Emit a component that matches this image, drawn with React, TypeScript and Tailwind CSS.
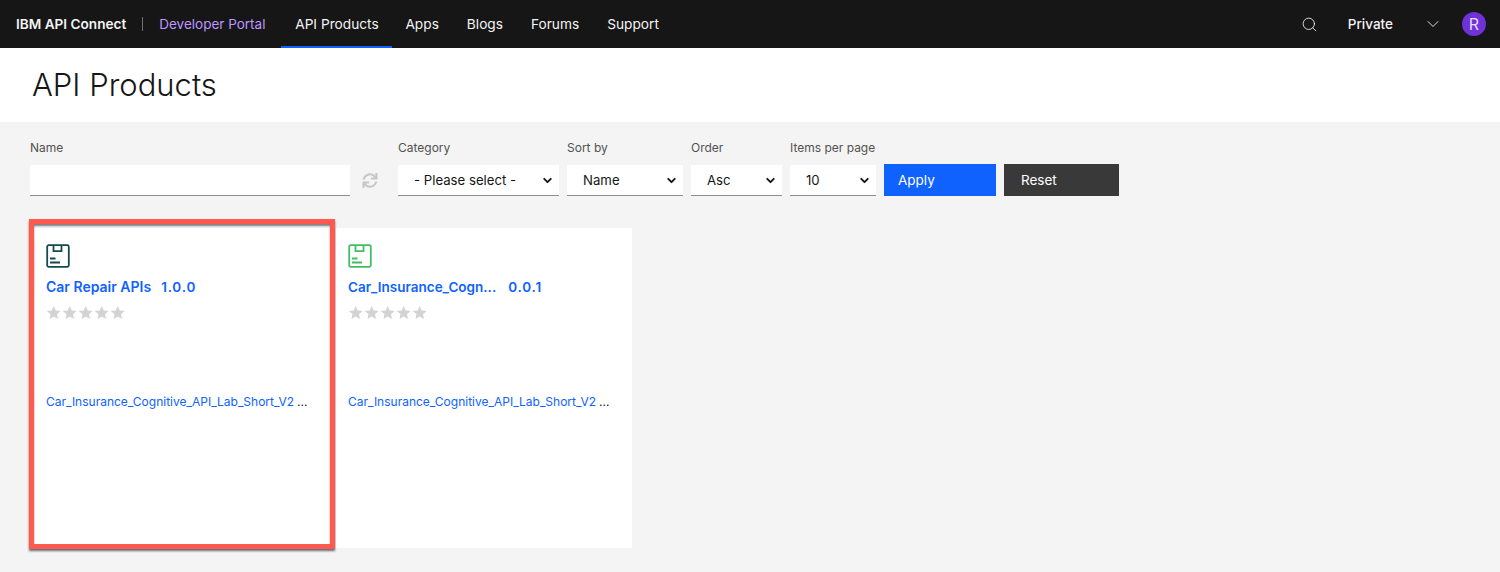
import { ChevronDown, Search } from "lucide-react";
import { FaSync } from "react-icons/fa";

const FONT = "font-['Inter','Liberation_Sans',sans-serif]";

const NAV_LINKS = ["Apps", "Blogs", "Forums", "Support"];

const FILTERS = [
  { label: "Category", value: "- Please select -", width: "w-[161px]" },
  { label: "Sort by", value: "Name", width: "w-[116px]" },
  { label: "Order", value: "Asc", width: "w-[91px]" },
  { label: "Items per page", value: "10", width: "w-[86px]" },
];

function ProductIcon({ color }: { color: string }) {
  return (
    <svg width="24" height="24" viewBox="0 0 24 24" fill="none" stroke={color} strokeWidth="1.8">
      <rect x="1.2" y="1.2" width="21.6" height="21.6" rx="1.5" />
      <path d="M7.5 1.5V7.2H15.5V1.5" />
      <path d="M4 14.5H9.5M4 18.5H14" />
    </svg>
  );
}

function Stars() {
  return (
    <div className="mt-[8px] flex h-[16px] items-center gap-[0.5px]">
      {[0, 1, 2, 3, 4].map((i) => (
        <svg key={i} width="15.5" height="15" viewBox="0 0 24 24" fill="#d3d3d3">
          <path d="M12 1.5l3.2 7.3 7.9.8-6 5.2 1.8 7.7L12 18.4l-6.9 4.1 1.8-7.7-6-5.2 7.9-.8z" />
        </svg>
      ))}
    </div>
  );
}

function ProductCard({
  name,
  version,
  color,
  nameClass,
  highlighted,
}: {
  name: string;
  version: string;
  color: string;
  nameClass: string;
  highlighted?: boolean;
}) {
  return (
    <div className="relative h-[320px] w-[296px] bg-white px-[12px] pt-[16px]">
      <ProductIcon color={color} />
      <div className="mt-[10px] flex leading-[18px] font-semibold text-[#0f62fe]">
        <span className={nameClass}>{name}</span>
        <span className="text-[13.5px] tracking-[0.8px]">{version}</span>
      </div>
      <Stars />
      <div className="mt-[74px] flex text-[12px] leading-[16px] text-[#0f62fe]">
        <span>Car_Insurance_Cognitive_API_Lab_Short_V2</span>
        <span className="ml-[3px] text-[#161616]">...</span>
      </div>
      {highlighted && (
        <div className="pointer-events-none absolute top-[-9px] right-[-5px] bottom-[-1px] left-[-5px] border-[5px] border-[#ff5a4d] shadow-[0_2px_2px_rgba(40,50,60,0.7),inset_0_2px_2px_rgba(40,50,60,0.6)]" />
      )}
    </div>
  );
}

export default function App() {
  return (
    <div className={`${FONT} h-[572px] w-[1500px] overflow-hidden bg-[#f4f4f4]`}>
      {/* Top nav */}
      <header className="flex h-[48px] items-center bg-[#161616] text-[13.5px] text-[#f4f4f4]">
        <span className="ml-[16px] text-[13.6px] font-semibold">IBM API Connect</span>
        <span className="mx-[16px] h-[14px] w-px bg-[#6f6f6f]" />
        <span className="text-[#be95ff]">Developer Portal</span>
        <nav className="ml-[16px] flex h-full text-[13.7px]">
          <a className="flex h-full w-[111px] items-center justify-center border-b-2 border-[#0f62fe] pt-[2px]">
            API Products
          </a>
          <div className="ml-[13px] flex h-full items-center gap-[28px]">
            {NAV_LINKS.map((link) => (
              <a key={link}>{link}</a>
            ))}
          </div>
        </nav>
        <div className="ml-auto flex items-center">
          <Search size={17} strokeWidth={1.2} />
          <span className="ml-[30px] font-medium">Private</span>
          <ChevronDown size={20} strokeWidth={1.1} className="ml-[30px]" />
          <span className="mr-[14px] ml-[19px] flex h-[24px] w-[24px] items-center justify-center rounded-full bg-[#6f32d8] text-[16px] text-[#e8daff]">
            R
          </span>
        </div>
      </header>

      {/* Page title */}
      <div className="flex h-[74px] items-center bg-white pl-[32px]">
        <h1 className="text-[31px] font-light text-[#161616]">API Products</h1>
      </div>

      {/* Filters */}
      <div className="mt-[18px] flex items-end pl-[30px]">
        <div>
          <label className="block text-[12px] leading-[16px] text-[#525252]">Name</label>
          <div className="mt-[9px] h-[31px] w-[320px] border-b border-[#8d8d8d] bg-white" />
        </div>
        <FaSync size={15} className="mr-[20px] mb-[8px] ml-[12px] w-[16px] text-[#c6c6c6]" />
        <div className="flex gap-[8px]">
          {FILTERS.map((f) => (
            <div key={f.label} className={f.width}>
              <label className="block text-[12px] leading-[16px] whitespace-nowrap text-[#525252]">{f.label}</label>
              <div className="mt-[9px] flex h-[31px] items-center justify-between border-b border-[#8d8d8d] bg-white pt-[1px] pr-[5px] pl-[16px] text-[13.2px] text-[#161616]">
                <span>{f.value}</span>
                <ChevronDown size={13} strokeWidth={3.5} />
              </div>
            </div>
          ))}
        </div>
        <button className="ml-[8px] flex h-[32px] w-[112px] items-center bg-[#0f62fe] pl-[14px] text-[13.5px] text-white">
          Apply
        </button>
        <button className="ml-[8px] flex h-[32px] w-[115px] items-center bg-[#393939] pl-[17px] text-[13.5px] text-white">
          Reset
        </button>
      </div>

      {/* Cards */}
      <div className="mt-[32px] flex gap-[6px] pl-[34px]">
        <ProductCard
          name="Car Repair APIs"
          version="1.0.0"
          color="#144b52"
          nameClass="mr-[10px] text-[14px]"
          highlighted
        />
        <ProductCard
          name="Car_Insurance_Cogn..."
          version="0.0.1"
          color="#42be65"
          nameClass="mr-[12px] text-[13.5px]"
        />
      </div>
    </div>
  );
}
